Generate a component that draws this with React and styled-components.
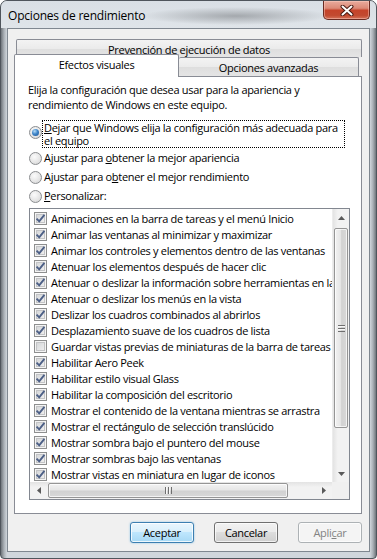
import styled, { createGlobalStyle } from "styled-components"

const FONT = `"Open Sans", "Noto Sans", sans-serif`

const ITEMS = [
    ["Animaciones en la barra de tareas y el menú Inicio", true],
    ["Animar las ventanas al minimizar y maximizar", true],
    ["Animar los controles y elementos dentro de las ventanas", true],
    ["Atenuar los elementos después de hacer clic", true],
    ["Atenuar o deslizar la información sobre herramientas en la vista", true],
    ["Atenuar o deslizar los menús en la vista", true],
    ["Deslizar los cuadros combinados al abrirlos", true],
    ["Desplazamiento suave de los cuadros de lista", true],
    ["Guardar vistas previas de miniaturas de la barra de tareas", false],
    ["Habilitar Aero Peek", true],
    ["Habilitar estilo visual Glass", true],
    ["Habilitar la composición del escritorio", true],
    ["Mostrar el contenido de la ventana mientras se arrastra", true],
    ["Mostrar el rectángulo de selección translúcido", true],
    ["Mostrar sombra bajo el puntero del mouse", true],
    ["Mostrar sombras bajo las ventanas", true],
    ["Mostrar vistas en miniatura en lugar de iconos", true],
]

export default function App () {
    return (
        <>
            <Global />
            <Ventana>
                <BarraTitulo>
                    <Titulo>Opciones de rendimiento</Titulo>
                    <BotonCerrar>
                        <svg width="14" height="11" viewBox="0 0 14 11">
                            <path d="M2.5 1.5 L11.5 9.5 M11.5 1.5 L2.5 9.5" stroke="#4a1a12" strokeWidth="4" strokeLinecap="round" />
                            <path d="M2.5 1.5 L11.5 9.5 M11.5 1.5 L2.5 9.5" stroke="#ffffff" strokeWidth="2" strokeLinecap="round" />
                        </svg>
                    </BotonCerrar>
                </BarraTitulo>

                <Cliente>
                    <Pestanas>
                        <FilaFondo>
                            <Pestana grow>Prevención de ejecución de datos</Pestana>
                        </FilaFondo>
                        <FilaFrente>
                            <PestanaActiva>Efectos visuales</PestanaActiva>
                            <Pestana ancho="180px">Opciones avanzadas</Pestana>
                        </FilaFrente>
                    </Pestanas>

                    <Panel>
                        <Descripcion>
                            Elija la configuración que desea usar para la apariencia y<br />
                            rendimiento de Windows en este equipo.
                        </Descripcion>

                        <Radios>
                            <FilaRadio arriba>
                                <Radio marcado arriba />
                                <EtiquetaRadio foco>
                                    <u>D</u>ejar que Windows elija la configuración más adecuada para<br />
                                    el equipo
                                </EtiquetaRadio>
                            </FilaRadio>
                            <FilaRadio>
                                <Radio />
                                <EtiquetaRadio>Ajustar para <u>o</u>btener la mejor apariencia</EtiquetaRadio>
                            </FilaRadio>
                            <FilaRadio>
                                <Radio />
                                <EtiquetaRadio>Ajustar para o<u>b</u>tener el mejor rendimiento</EtiquetaRadio>
                            </FilaRadio>
                            <FilaRadio>
                                <Radio />
                                <EtiquetaRadio><u>P</u>ersonalizar:</EtiquetaRadio>
                            </FilaRadio>
                        </Radios>

                        <Lista>
                            <Items>
                                {ITEMS.map(([texto, marcado], index) => (
                                    <Item key={index}>
                                        <Casilla>
                                            <CasillaInterior>
                                                {marcado && (
                                                    <svg width="11" height="11" viewBox="0 0 11 11">
                                                        <path d="M1.6 5.6 L4.2 8.3 L9.4 1.8" fill="none" stroke="#4c5f86" strokeWidth="1.9" />
                                                    </svg>
                                                )}
                                            </CasillaInterior>
                                        </Casilla>
                                        <span>{texto}</span>
                                    </Item>
                                ))}
                            </Items>

                            <BarraVertical>
                                <Flecha>
                                    <svg width="7" height="4" viewBox="0 0 7 4"><path d="M0 4 L3.5 0 L7 4 Z" fill="#5a5a5a" /></svg>
                                </Flecha>
                                <Pista>
                                    <PulgarV>
                                        <Agarre vertical />
                                    </PulgarV>
                                </Pista>
                                <Flecha>
                                    <svg width="7" height="4" viewBox="0 0 7 4"><path d="M0 0 L3.5 4 L7 0 Z" fill="#5a5a5a" /></svg>
                                </Flecha>
                            </BarraVertical>

                            <BarraHorizontal>
                                <Flecha>
                                    <svg width="4" height="7" viewBox="0 0 4 7"><path d="M4 0 L0 3.5 L4 7 Z" fill="#5a5a5a" /></svg>
                                </Flecha>
                                <Pista horizontal>
                                    <PulgarH>
                                        <Agarre />
                                    </PulgarH>
                                </Pista>
                                <Flecha>
                                    <svg width="4" height="7" viewBox="0 0 4 7"><path d="M0 0 L4 3.5 L0 7 Z" fill="#5a5a5a" /></svg>
                                </Flecha>
                            </BarraHorizontal>

                            <Esquina />
                        </Lista>
                    </Panel>

                    <Botones>
                        <Boton tipo="defecto">Aceptar</Boton>
                        <Boton>Cancelar</Boton>
                        <Boton tipo="inactivo">Apli<u>c</u>ar</Boton>
                    </Botones>
                </Cliente>
            </Ventana>
        </>
    )
}

const Global = createGlobalStyle`
    html, body {
        margin: 0;
        padding: 0;
        background: #ffffff;
    }
    body {
        font-family: ${FONT};
        font-size: 11px;
        color: #000000;
    }
    * {
        box-sizing: border-box;
    }
`
const Ventana = styled.div`
    width: 377px;
    height: 559px;
    display: flex;
    flex-direction: column;
    padding: 0 6px 6px 6px;
    border: 1px solid #4f555c;
    border-radius: 7px 7px 4px 4px;
    background:
        linear-gradient(90deg, #6f757b 0px, #a9afb5 3px, #d0d6dc 6px, #d0d6dc calc(100% - 6px), #a9afb5 calc(100% - 3px), #6f757b 100%);
    overflow: hidden;
`
const BarraTitulo = styled.div`
    height: 27px;
    flex-shrink: 0;
    display: flex;
    justify-content: space-between;
    align-items: flex-start;
    margin: 0 -6px 0 -6px;
    padding: 0 6px 0 7px;
    background:
        radial-gradient(ellipse 95px 9px at 235px 15px, rgba(95, 98, 102, 0.45), rgba(95, 98, 102, 0) 100%),
        linear-gradient(180deg, #d9dfe5 0%, #dfe4e9 100%);
`
const Titulo = styled.span`
    font-size: 12px;
    letter-spacing: -0.2px;
    line-height: 27px;
    color: #000000;
    padding-top: 1px;
`
const BotonCerrar = styled.div`
    width: 47px;
    height: 19px;
    display: flex;
    align-items: center;
    justify-content: center;
    border: 1px solid #6a2b22;
    border-top: none;
    border-radius: 0 0 5px 5px;
    background: linear-gradient(180deg, #e9ab9d 0%, #dc8a77 40%, #c5432a 52%, #c24a30 80%, #d5725a 100%);
    box-shadow: inset 0 0 0 1px rgba(255, 210, 200, 0.45);
`
const Cliente = styled.div`
    flex: 1;
    display: flex;
    flex-direction: column;
    padding: 10px 7px 0 6px;
    background-color: #f0f0f0;
    border: 1px solid #7f8790;
`
const Pestanas = styled.div`
    display: flex;
    flex-direction: column;
`
const FilaFondo = styled.div`
    display: flex;
    height: 18px;
    padding-left: 2px;
`
const FilaFrente = styled.div`
    display: flex;
    align-items: flex-end;
    height: 19px;
`
const Pestana = styled.div`
    ${props => props.grow ? "flex: 1;" : `width: ${props.ancho};`}
    height: ${props => props.grow ? "18px" : "19px"};
    display: flex;
    align-items: center;
    justify-content: center;
    border: 1px solid #898c95;
    border-bottom: none;
    ${props => props.grow ? "" : "border-left: none;"}
    border-radius: 2px 2px 0 0;
    background: linear-gradient(180deg, #f3f3f3 0%, #ebebeb 50%, #dedede 51%, #e5e5e5 100%);
    font-size: 11px;
    letter-spacing: -0.3px;
    padding-top: 1px;
`
const PestanaActiva = styled.div`
    position: relative;
    z-index: 1;
    width: 165px;
    height: 23px;
    margin-bottom: -1px;
    display: flex;
    align-items: flex-start;
    justify-content: center;
    padding-top: 2px;
    border: 1px solid #898c95;
    border-bottom: none;
    border-radius: 2px 2px 0 0;
    background-color: #ffffff;
    font-size: 11px;
    letter-spacing: -0.3px;
`
const Panel = styled.div`
    height: 438px;
    display: flex;
    flex-direction: column;
    padding: 5px 12px 0 13px;
    background-color: #ffffff;
    border: 1px solid #898c95;
`
const Descripcion = styled.p`
    margin: 0;
    font-size: 11px;
    letter-spacing: -0.3px;
    line-height: 15px;
`
const Radios = styled.div`
    display: flex;
    flex-direction: column;
    gap: 1px;
    margin-top: 8px;
`
const FilaRadio = styled.div`
    display: flex;
    align-items: ${props => props.arriba ? "flex-start" : "center"};
    min-height: 18px;
`
const Radio = styled.span`
    width: 13px;
    height: 13px;
    flex-shrink: 0;
    margin-left: 1px;
    margin-top: ${props => props.arriba ? "6px" : "0"};
    border-radius: 50%;
    border: 1px solid #8b8d90;
    background: radial-gradient(circle at 40% 35%, #fbfbfb 0%, #e6e6e6 55%, #cfd0d1 100%);
    display: flex;
    align-items: center;
    justify-content: center;

    &::after {
        content: "";
        display: ${props => props.marcado ? "block" : "none"};
        width: 7px;
        height: 7px;
        border-radius: 50%;
        background: radial-gradient(circle at 38% 32%, #b6dcf8 0%, #3f86c9 45%, #1d4f8f 100%);
    }
`
const EtiquetaRadio = styled.span`
    font-size: 11px;
    letter-spacing: -0.3px;
    line-height: ${props => props.foco ? "13px" : "16px"};
    padding: ${props => props.foco ? "0 6px 0 1px" : "0 1px"};
    white-space: nowrap;
    border: 1px dotted ${props => props.foco ? "#000000" : "transparent"};

    u {
        text-decoration-thickness: 1px;
        text-underline-offset: 1px;
    }
`
const Lista = styled.div`
    height: 292px;
    width: 321px;
    margin-top: 3px;
    margin-left: 1px;
    display: grid;
    grid-template-columns: 1fr 17px;
    grid-template-rows: 1fr 17px;
    border: 1px solid #828790;
    background-color: #ffffff;
`
const Items = styled.div`
    overflow: hidden;
    padding: 1px 0 0 4px;
`
const Item = styled.div`
    height: 16px;
    display: flex;
    align-items: center;
    gap: 4px;
    white-space: nowrap;
    font-size: 11px;
    letter-spacing: -0.3px;
`
const Casilla = styled.span`
    width: 13px;
    height: 13px;
    flex-shrink: 0;
    display: flex;
    align-items: center;
    justify-content: center;
    border: 1px solid #8e8f8f;
    background-color: #f4f4f4;
`
const CasillaInterior = styled.span`
    width: 9px;
    height: 9px;
    display: flex;
    align-items: center;
    justify-content: center;
    border: 1px solid #c3c4c6;
    background: linear-gradient(135deg, #d6d8da 0%, #eeeeee 100%);
    overflow: visible;

    svg {
        flex-shrink: 0;
    }
`
const BarraVertical = styled.div`
    display: flex;
    flex-direction: column;
    background: linear-gradient(90deg, #e3e3e3 0%, #f2f2f2 30%, #f2f2f2 100%);
    border-left: 1px solid #ececec;
`
const BarraHorizontal = styled.div`
    display: flex;
    background: linear-gradient(180deg, #e3e3e3 0%, #f2f2f2 30%, #f2f2f2 100%);
`
const Flecha = styled.div`
    width: 17px;
    height: 17px;
    flex-shrink: 0;
    display: flex;
    align-items: center;
    justify-content: center;
`
const Pista = styled.div`
    flex: 1;
    display: flex;
    flex-direction: ${props => props.horizontal ? "row" : "column"};
    padding: ${props => props.horizontal ? "0 0 0 1px" : "2px 0 0 0"};
`
const PulgarV = styled.div`
    height: 200px;
    margin: 0 1px;
    display: flex;
    align-items: center;
    justify-content: center;
    border: 1px solid #959595;
    border-radius: 2px;
    background: linear-gradient(90deg, #f2f2f2 0%, #e6e6e6 45%, #d2d2d2 55%, #d8d8d8 100%);
    box-shadow: inset 0 0 0 1px rgba(255, 255, 255, 0.7);
`
const PulgarH = styled.div`
    width: 240px;
    margin: 1px 0;
    display: flex;
    align-items: center;
    justify-content: center;
    border: 1px solid #959595;
    border-radius: 2px;
    background: linear-gradient(180deg, #f2f2f2 0%, #e6e6e6 45%, #d2d2d2 55%, #d8d8d8 100%);
    box-shadow: inset 0 0 0 1px rgba(255, 255, 255, 0.7);
`
const Agarre = styled.span`
    width: 7px;
    height: 7px;
    background: ${props => props.vertical
        ? "repeating-linear-gradient(180deg, #6f6f6f 0 1px, #f8f8f8 1px 2px, transparent 2px 3px)"
        : "repeating-linear-gradient(90deg, #6f6f6f 0 1px, #f8f8f8 1px 2px, transparent 2px 3px)"};
`
const Esquina = styled.div`
    background-color: #f0f0f0;
`
const Botones = styled.div`
    display: flex;
    justify-content: flex-end;
    gap: 20px;
    margin-top: 8px;
`
const Boton = styled.button`
    width: 64px;
    height: 21px;
    padding: 0;
    font-family: ${FONT};
    font-size: 11px;
    letter-spacing: -0.3px;
    border-radius: 3px;
    border: 1px solid ${props => props.tipo === "defecto" ? "#3c7fb1" : props.tipo === "inactivo" ? "#adb2b5" : "#707070"};
    color: ${props => props.tipo === "inactivo" ? "#838383" : "#000000"};
    background: ${props => props.tipo === "defecto"
        ? "linear-gradient(180deg, #eaf6fd 0%, #d9f0fc 45%, #bee6fd 50%, #a7d9f5 100%)"
        : props.tipo === "inactivo"
            ? "#f4f4f4"
            : "linear-gradient(180deg, #f2f2f2 0%, #ebebeb 45%, #dddddd 50%, #cfcfcf 100%)"};
    box-shadow: ${props => props.tipo === "defecto"
        ? "inset 0 0 0 1px rgba(255,255,255,0.8), 0 0 2px rgba(60,160,220,0.6)"
        : "inset 0 0 0 1px rgba(255,255,255,0.7)"};

    u {
        text-decoration-thickness: 1px;
    }
`
